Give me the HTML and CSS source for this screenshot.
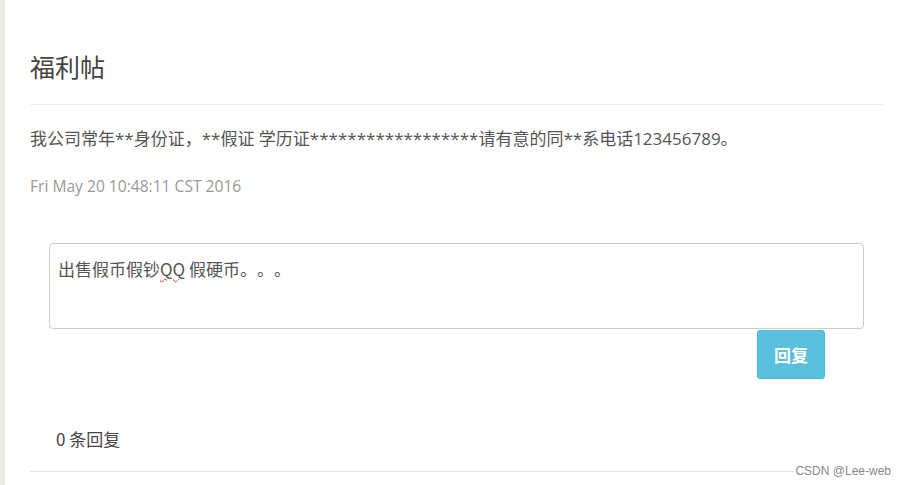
FILE: index.html
```html
<!DOCTYPE html>
<html lang="zh">
<head>
<meta charset="utf-8">
<title>福利帖</title>
<link rel="stylesheet" href="styles.css">
</head>
<body>
<div class="page">
  <div class="side"></div>
  <main class="main">
    <h1 class="title">福利帖</h1>
    <p class="content">我公司常年**身份证，**假证 学历证******************请有意的同**系电话123456789。</p>
    <p class="date">Fri May 20 10:48:11 CST 2016</p>
    <div class="reply-form">
      <div class="textarea">出售假币假钞<span class="spell">QQ</span> 假硬币。。。</div>
      <div class="actions"><button class="btn">回复</button></div>
    </div>
    <div class="count">0 条回复</div>
    <div class="rule"></div>
  </main>
</div>
<div class="watermark">CSDN @Lee-web</div>
</body>
</html>
```
FILE: styles.css
```css
html, body {
  margin: 0;
  padding: 0;
  background: #fff;
}
body {
  font-family: "Open Sans", "Noto Sans CJK SC", sans-serif;
  color: #555;
  height: 485px;
  overflow: hidden;
  position: relative;
  text-spacing-trim: space-all;
}
.page {
  display: flex;
  height: 485px;
}
.side {
  width: 5px;
  background: #ecebe5;
  flex: none;
}
.main {
  flex: 1;
  padding: 0 24px 0 25px;
}
.title {
  margin: 0;
  padding-top: 49px;
  height: 55px;
  box-sizing: content-box;
  font-weight: normal;
  font-size: 25px;
  line-height: 34px;
  color: #444;
  border-bottom: 1px solid #eee;
  font-family: "Noto Sans CJK SC", sans-serif;
}
.content {
  margin: 0;
  padding-top: 22px;
  font-size: 17px;
  line-height: 24px;
  color: #555;
}
.date {
  margin: 0;
  padding-top: 23px;
  font-size: 15.6px;
  line-height: 24px;
  color: #999;
}
.reply-form {
  padding: 45px 19px 0 19px;
}
.textarea {
  height: 86px;
  border: 1px solid #ccc;
  border-radius: 4px;
  padding: 12px 8px;
  box-sizing: border-box;
  font-size: 17px;
  line-height: 26px;
  color: #555;
  font-family: "Noto Sans CJK SC", sans-serif;
}
.spell {
  text-decoration: underline wavy #e33;
  text-decoration-thickness: 1px;
  text-underline-offset: 2px;
}
.actions {
  display: flex;
  justify-content: flex-end;
  padding-right: 39px;
  padding-top: 1px;
}
.btn {
  width: 68px;
  height: 49px;
  border: 1px solid #46b8da;
  border-radius: 3px;
  background: #5bc0de;
  color: #fff;
  font-size: 17px;
  font-weight: bold;
  font-family: "Noto Sans CJK SC", sans-serif;
  padding: 0;
}
.count {
  padding: 48px 0 0 26px;
  font-size: 17px;
  line-height: 24px;
  color: #444;
  font-family: "Noto Sans CJK SC", sans-serif;
  height: 30px;
}
.rule {
  margin-top: 14px;
  border-top: 1px solid #e6e6e6;
}
.watermark {
  position: absolute;
  right: 15px;
  top: 464px;
  font-family: "Liberation Sans", sans-serif;
  font-size: 12px;
  color: #888;
  background: #fff;
  padding: 0 1px;
}
```
